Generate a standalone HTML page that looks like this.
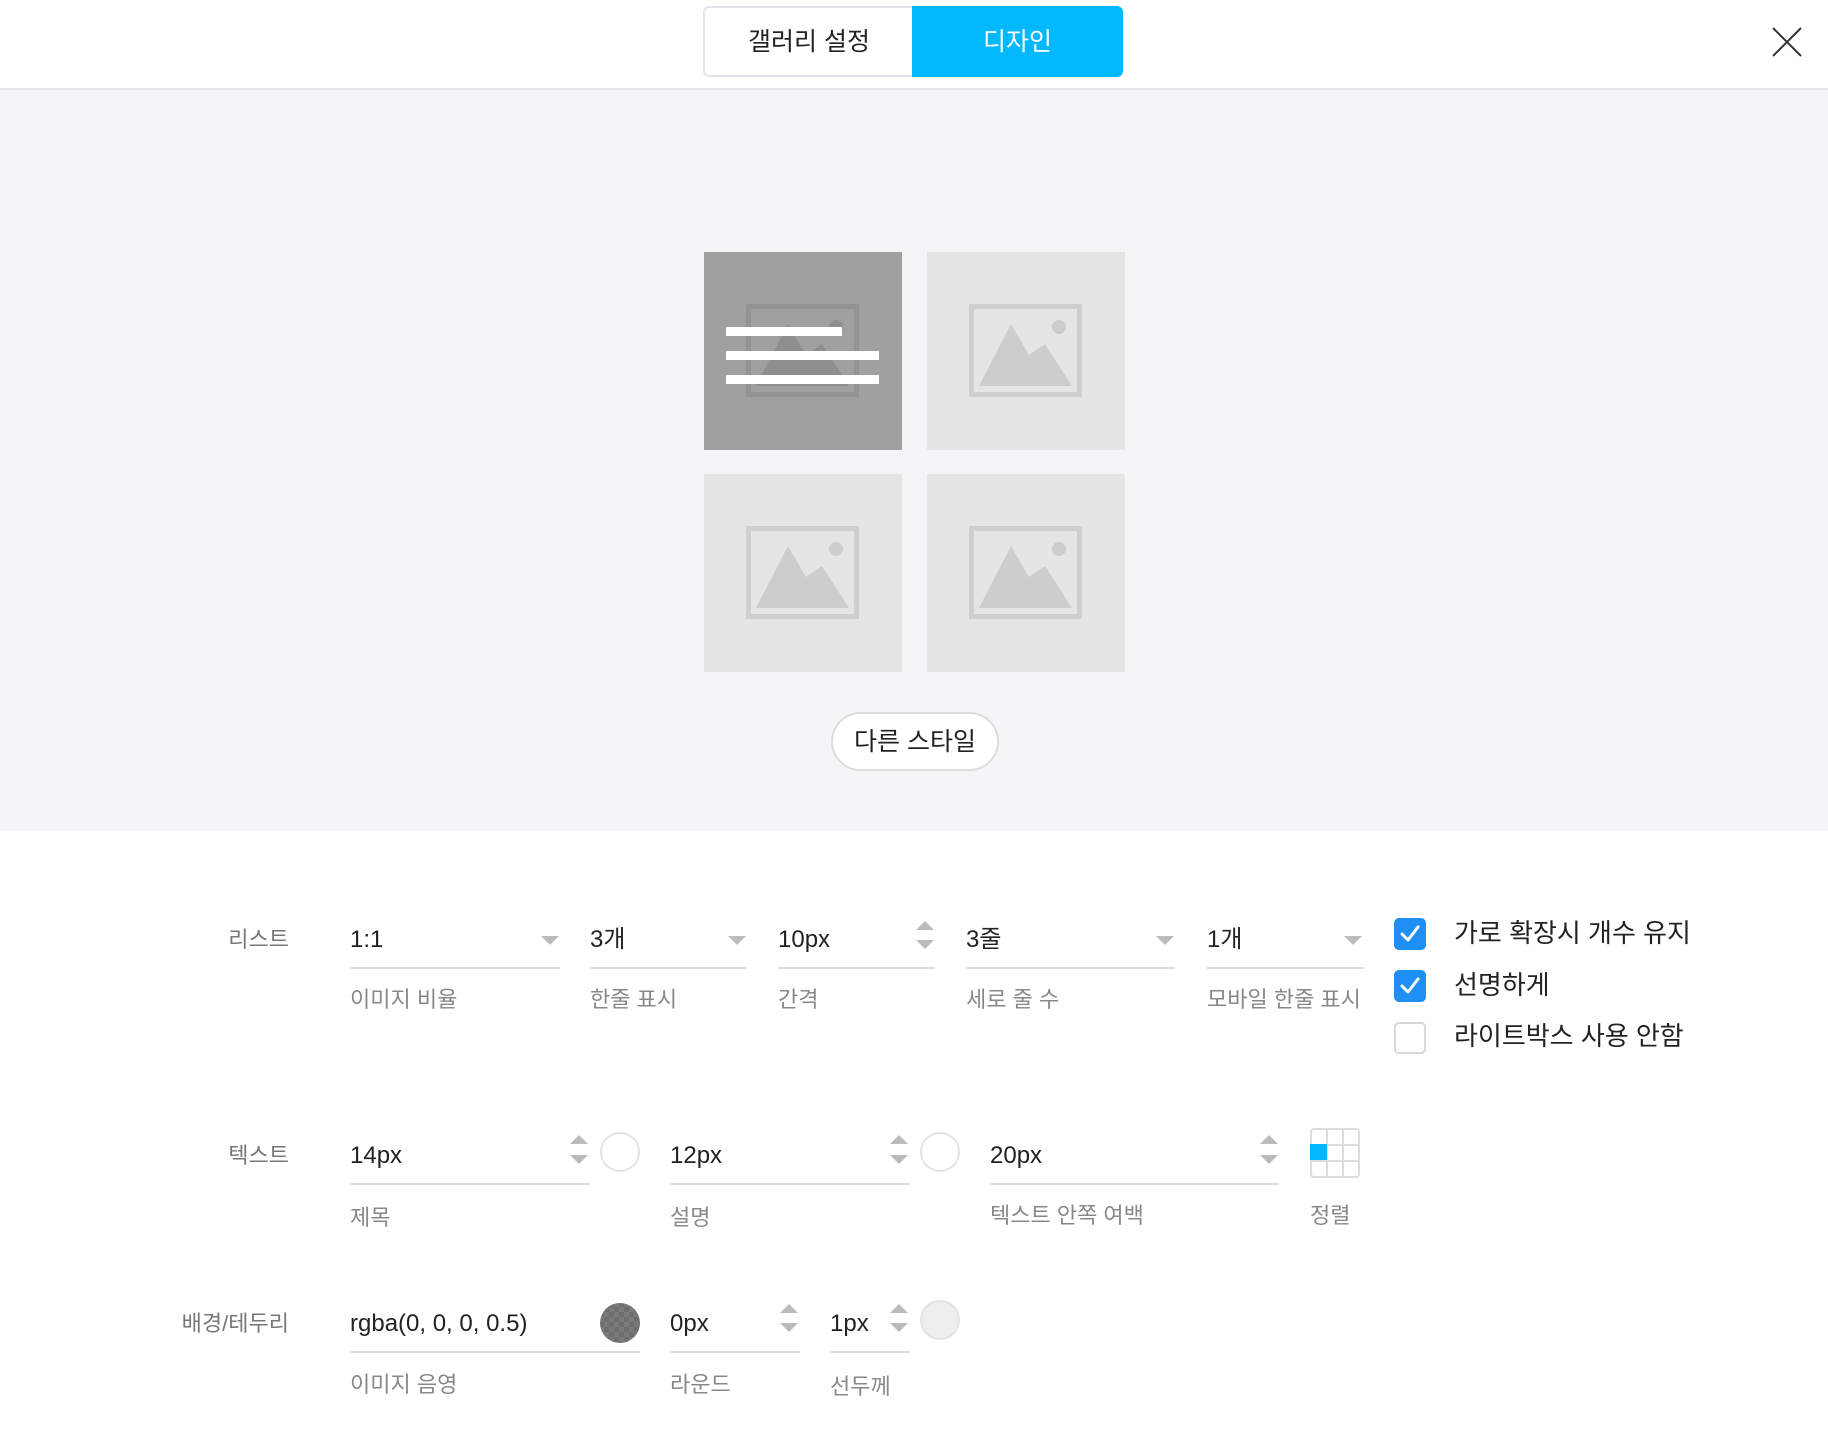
<!DOCTYPE html>
<html><head><meta charset="utf-8"><style>
*{margin:0;padding:0;box-sizing:border-box}
body{width:1828px;height:1441px;position:relative;background:#fff;font-family:"Liberation Sans","Noto Sans CJK KR",sans-serif;overflow:hidden;color:#333}
.a{position:absolute}
.hdr{left:0;top:0;width:1828px;height:90px;border-bottom:2px solid #e5e6e8;background:#fff}
.gray{left:0;top:90px;width:1828px;height:741px;background:#f5f5f7}
.tog1{left:703px;top:6px;width:210px;height:71px;border:2px solid #e1e4ea;border-right:none;border-radius:6px 0 0 6px;background:#fff;font-size:25px;line-height:69px;text-align:center;color:#222}
.tog2{left:912px;top:6px;width:211px;height:71px;background:#00b8ff;border-radius:0 6px 6px 0;font-size:25px;line-height:73px;text-align:center;color:#fff}
.tile{width:198px;height:198px;background:#e5e5e5}
.btn{left:831px;top:712px;width:168px;height:59px;border:2px solid #ddd;border-radius:30px;background:#fff;font-size:25px;line-height:57px;text-align:center;color:#222}
.lab{font-size:22px;color:#777;line-height:30px;text-align:right;width:200px}
.val{font-size:24px;color:#222;line-height:30px}
.sub{font-size:22px;color:#888;line-height:30px}
.ul{height:2px;background:#ddd}
.tri{width:0;height:0;border-left:9px solid transparent;border-right:9px solid transparent;border-top:9px solid #bbb}
.up{width:0;height:0;border-left:9px solid transparent;border-right:9px solid transparent;border-bottom:9px solid #bbb}
.cir{width:40px;height:40px;border-radius:50%;border:2px solid #e3e3e3;background:#fff}
.cb{width:32px;height:32px;border-radius:5px;background:#1e90f5}
.cbt{font-size:26px;color:#222;line-height:34px}
</style></head><body>
<div class="a hdr"></div>
<div class="a tog1">갤러리 설정</div>
<div class="a tog2">디자인</div>
<svg class="a" style="left:1770px;top:26px" width="34" height="32"><path d="M3 2L31 30M31 2L3 30" stroke="#333" stroke-width="2" fill="none"/></svg>
<div class="a gray"></div>

<div class="a tile" style="left:704px;top:252px;background:#a0a0a0"></div>
<div class="a tile" style="left:927px;top:252px"></div>
<div class="a tile" style="left:704px;top:474px"></div>
<div class="a tile" style="left:927px;top:474px"></div>

<svg class="a" style="left:746px;top:304px" width="113" height="93" viewBox="0 0 113 93"><rect x="2.5" y="2.5" width="108" height="88" fill="none" stroke="#939393" stroke-width="5"/><path d="M10 82L42 20L60 51L76 40L103 82Z" fill="#8e8e8e"/><circle cx="90" cy="23" r="7" fill="#8e8e8e"/></svg>
<svg class="a" style="left:969px;top:304px" width="113" height="93" viewBox="0 0 113 93"><rect x="2.5" y="2.5" width="108" height="88" fill="none" stroke="#cfcfcf" stroke-width="5"/><path d="M10 82L42 20L60 51L76 40L103 82Z" fill="#cdcdcd"/><circle cx="90" cy="23" r="7" fill="#cdcdcd"/></svg>
<svg class="a" style="left:746px;top:526px" width="113" height="93" viewBox="0 0 113 93"><rect x="2.5" y="2.5" width="108" height="88" fill="none" stroke="#cfcfcf" stroke-width="5"/><path d="M10 82L42 20L60 51L76 40L103 82Z" fill="#cdcdcd"/><circle cx="90" cy="23" r="7" fill="#cdcdcd"/></svg>
<svg class="a" style="left:969px;top:526px" width="113" height="93" viewBox="0 0 113 93"><rect x="2.5" y="2.5" width="108" height="88" fill="none" stroke="#cfcfcf" stroke-width="5"/><path d="M10 82L42 20L60 51L76 40L103 82Z" fill="#cdcdcd"/><circle cx="90" cy="23" r="7" fill="#cdcdcd"/></svg>
<div class="a" style="left:726px;top:327px;width:116px;height:9px;background:#fff"></div>
<div class="a" style="left:726px;top:351px;width:153px;height:9px;background:#fff"></div>
<div class="a" style="left:726px;top:375px;width:153px;height:9px;background:#fff"></div>

<div class="a btn">다른 스타일</div>

<!-- Row 1 -->
<div class="a lab" style="left:89px;top:925px">리스트</div>
<div class="a val" style="left:350px;top:925px">1:1</div><div class="a tri" style="left:541px;top:936px"></div><div class="a ul" style="left:350px;top:967px;width:210px"></div><div class="a sub" style="left:350px;top:985px">이미지 비율</div>
<div class="a val" style="left:590px;top:925px">3개</div><div class="a tri" style="left:728px;top:936px"></div><div class="a ul" style="left:590px;top:967px;width:157px"></div><div class="a sub" style="left:590px;top:985px">한줄 표시</div>
<div class="a val" style="left:778px;top:925px">10px</div><div class="a up" style="left:916px;top:921px"></div><div class="a tri" style="left:916px;top:940px"></div><div class="a ul" style="left:778px;top:967px;width:157px"></div><div class="a sub" style="left:778px;top:985px">간격</div>
<div class="a val" style="left:966px;top:925px">3줄</div><div class="a tri" style="left:1156px;top:936px"></div><div class="a ul" style="left:966px;top:967px;width:209px"></div><div class="a sub" style="left:966px;top:985px">세로 줄 수</div>
<div class="a val" style="left:1207px;top:925px">1개</div><div class="a tri" style="left:1344px;top:936px"></div><div class="a ul" style="left:1207px;top:967px;width:157px"></div><div class="a sub" style="left:1207px;top:985px">모바일 한줄 표시</div>

<div class="a cb" style="left:1394px;top:918px"></div><svg class="a" style="left:1394px;top:918px" width="32" height="32"><path d="M8 16l6 6L24 9" stroke="#fff" stroke-width="3" fill="none" stroke-linecap="round" stroke-linejoin="round"/></svg>
<div class="a cbt" style="left:1454px;top:916px">가로 확장시 개수 유지</div>
<div class="a cb" style="left:1394px;top:970px"></div><svg class="a" style="left:1394px;top:970px" width="32" height="32"><path d="M8 16l6 6L24 9" stroke="#fff" stroke-width="3" fill="none" stroke-linecap="round" stroke-linejoin="round"/></svg>
<div class="a cbt" style="left:1454px;top:968px">선명하게</div>
<div class="a" style="left:1394px;top:1022px;width:32px;height:32px;border:2px solid #d6d9dc;border-radius:5px"></div>
<div class="a cbt" style="left:1454px;top:1019px">라이트박스 사용 안함</div>

<!-- Row 2 -->
<div class="a lab" style="left:89px;top:1141px">텍스트</div>
<div class="a val" style="left:350px;top:1141px">14px</div><div class="a up" style="left:570px;top:1135px"></div><div class="a tri" style="left:570px;top:1155px"></div><div class="a ul" style="left:350px;top:1183px;width:240px"></div><div class="a sub" style="left:350px;top:1203px">제목</div>
<div class="a cir" style="left:600px;top:1132px"></div>
<div class="a val" style="left:670px;top:1141px">12px</div><div class="a up" style="left:890px;top:1135px"></div><div class="a tri" style="left:890px;top:1155px"></div><div class="a ul" style="left:670px;top:1183px;width:239px"></div><div class="a sub" style="left:670px;top:1203px">설명</div>
<div class="a cir" style="left:920px;top:1132px"></div>
<div class="a val" style="left:990px;top:1141px">20px</div><div class="a up" style="left:1260px;top:1135px"></div><div class="a tri" style="left:1260px;top:1155px"></div><div class="a ul" style="left:990px;top:1183px;width:289px"></div><div class="a sub" style="left:990px;top:1201px">텍스트 안쪽 여백</div>
<svg class="a" style="left:1310px;top:1128px" width="50" height="50"><rect x="1" y="1" width="48" height="48" rx="3" fill="#fff" stroke="#ddd" stroke-width="2"/><path d="M17 1V49M33 1V49M1 17H49M1 33H49" stroke="#ddd" stroke-width="2"/><rect x="0" y="16" width="17" height="16" fill="#00b8ff"/></svg>
<div class="a sub" style="left:1310px;top:1201px">정렬</div>

<!-- Row 3 -->
<div class="a lab" style="left:89px;top:1309px">배경/테두리</div>
<div class="a val" style="left:350px;top:1309px">rgba(0, 0, 0, 0.5)</div><div class="a ul" style="left:350px;top:1351px;width:290px"></div><div class="a sub" style="left:350px;top:1370px">이미지 음영</div>
<svg class="a" style="left:599px;top:1302px" width="42" height="42"><defs><pattern id="p" width="10" height="10" patternUnits="userSpaceOnUse"><rect width="10" height="10" fill="#7a7a7a"/><rect width="5" height="5" fill="#6e6e6e"/><rect x="5" y="5" width="5" height="5" fill="#6e6e6e"/></pattern></defs><circle cx="21" cy="21" r="20" fill="url(#p)"/></svg>
<div class="a val" style="left:670px;top:1309px">0px</div><div class="a up" style="left:780px;top:1304px"></div><div class="a tri" style="left:780px;top:1323px"></div><div class="a ul" style="left:670px;top:1351px;width:130px"></div><div class="a sub" style="left:670px;top:1370px">라운드</div>
<div class="a val" style="left:830px;top:1309px">1px</div><div class="a up" style="left:890px;top:1304px"></div><div class="a tri" style="left:890px;top:1323px"></div><div class="a ul" style="left:830px;top:1351px;width:80px"></div><div class="a sub" style="left:830px;top:1372px">선두께</div>
<div class="a cir" style="left:920px;top:1300px;background:#eee"></div>
</body></html>
